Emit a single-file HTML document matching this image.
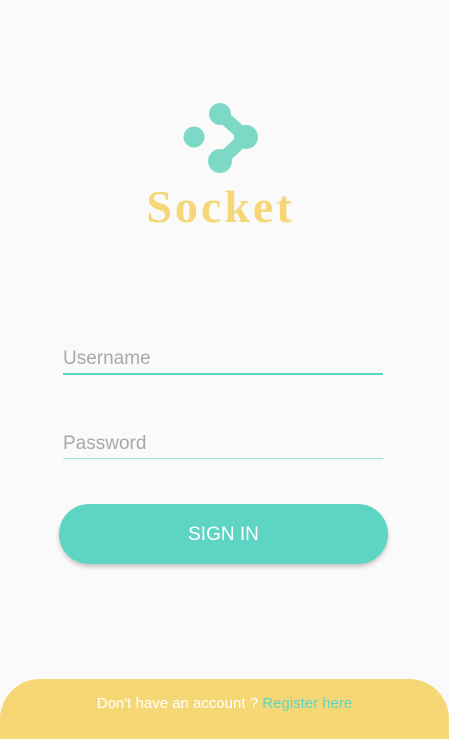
<!DOCTYPE html>
<html><head><meta charset="utf-8"><style>
html,body{margin:0;padding:0;}
body{width:449px;height:725px;background:#fafafa;position:relative;overflow:hidden;font-family:"Liberation Sans",sans-serif;}
.logo{position:absolute;left:0;top:0;}
.title{position:absolute;left:-4px;width:449px;top:180px;text-align:center;font-family:"Liberation Serif",serif;font-size:46px;font-weight:bold;color:#f5d778;letter-spacing:3px;}
.field{position:absolute;left:63px;width:320px;color:#a9a9a9;font-size:19px;}
.u{top:347px;height:26px;border-bottom:2px solid #5dd6c4;line-height:24px;}
.p{top:432px;height:26px;border-bottom:1.5px solid #9ee6db;line-height:24px;}
.btn{position:absolute;left:59px;top:504px;width:329px;height:60px;border-radius:30px;background:#5ed5c3;color:#fff;font-size:19px;text-align:center;line-height:61px;box-shadow:0 3px 4px rgba(0,0,0,0.2);}
.foot{position:absolute;left:0;top:679px;width:449px;height:60px;background:#f5d775;border-radius:40px 40px 0 0;color:#fff;font-size:15px;text-align:center;line-height:50px;}
.foot span{color:#5ed5c3;}
</style></head><body>
<svg class="logo" width="449" height="240">
<g fill="#7dd8c6" stroke="#7dd8c6">
<circle cx="194" cy="137" r="10.5" stroke="none"/>
<circle cx="220" cy="114" r="11" stroke="none"/>
<circle cx="246" cy="137" r="12" stroke="none"/>
<circle cx="220" cy="161" r="12" stroke="none"/>
<path d="M220 114 L246 137 L220 161" fill="none" stroke-width="13" stroke-linejoin="round"/>
</g>
</svg>
<div class="title">Socket</div>
<div class="field u">Username</div>
<div class="field p">Password</div>
<div class="btn">SIGN IN</div>
<div class="foot">Don't have an account ? <span>Register here</span></div>
</body></html>
